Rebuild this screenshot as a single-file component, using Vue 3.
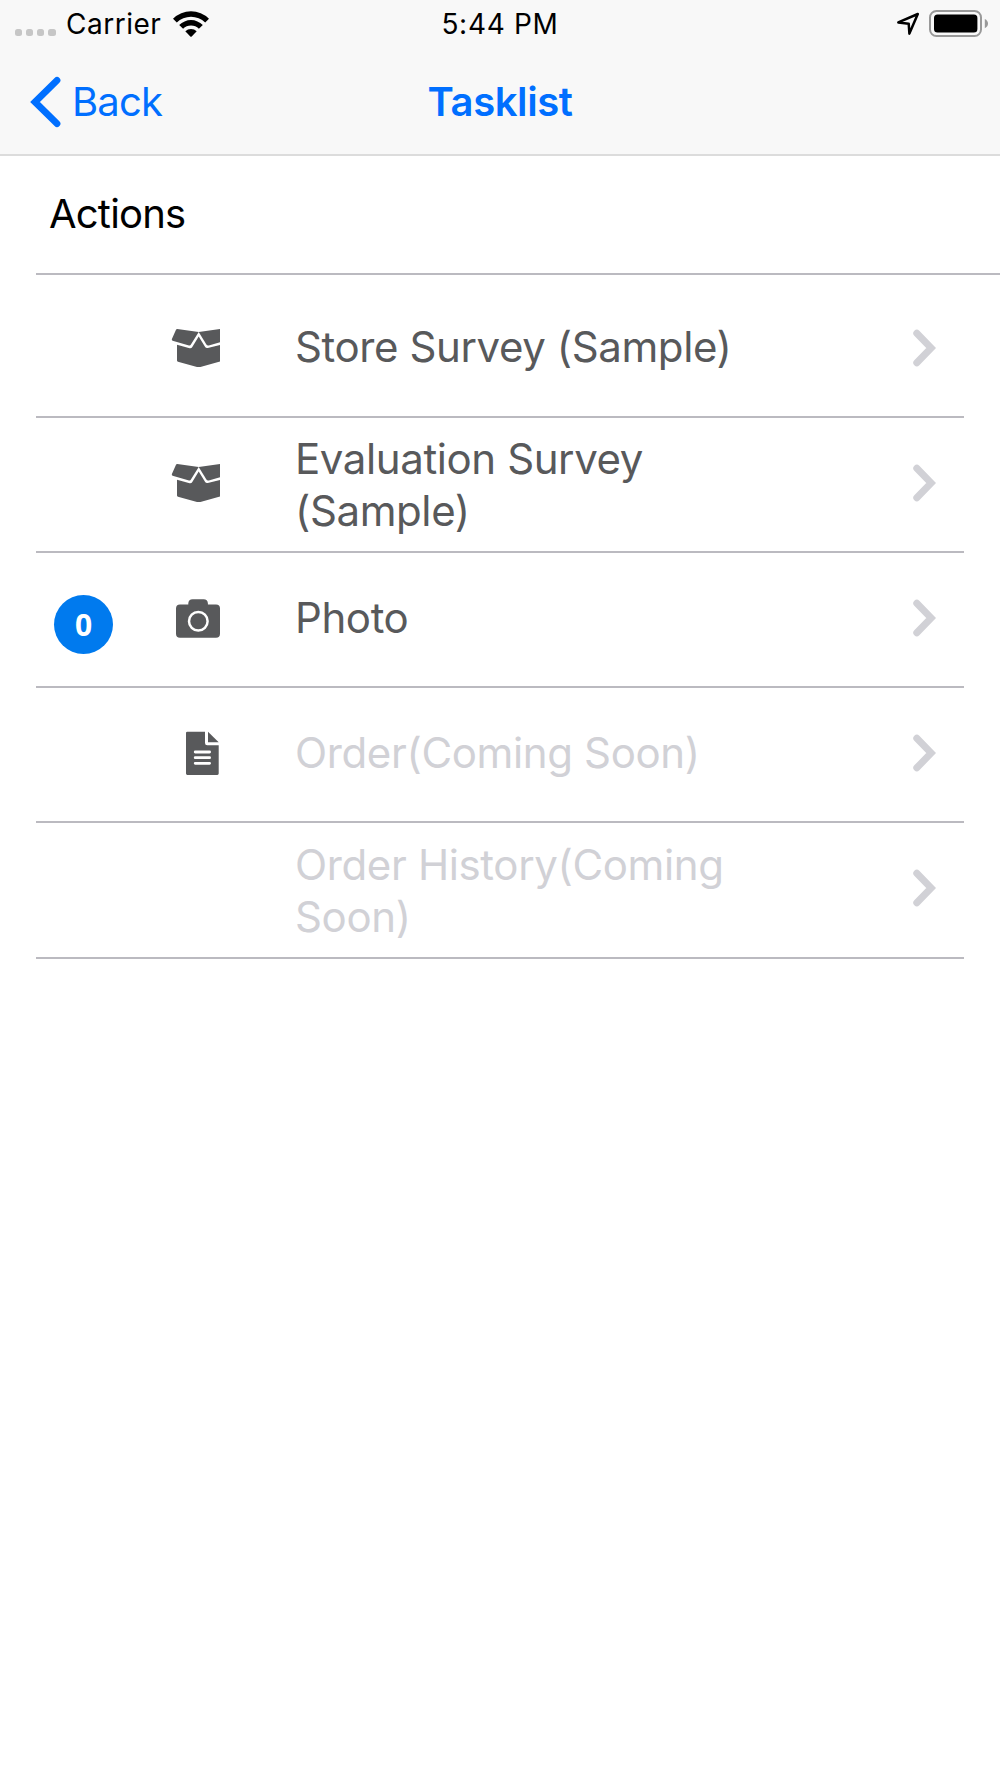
<template>
  <div class="screen">
    <header class="top-bar">
      <div class="status-bar">
        <div class="status-left">
          <div class="signal-dots">
            <i v-for="n in 4" :key="n"></i>
          </div>
          <span class="carrier">Carrier</span>
          <svg class="wifi" width="38" height="28" viewBox="0 0 38 28">
            <path d="M1 8.8 A25.5 25.5 0 0 1 37 8.8 L33.2 12.6 A20.1 20.1 0 0 0 4.8 12.6 Z" />
            <path d="M7.2 15 A16.7 16.7 0 0 1 30.8 15 L26.9 18.8 A11.2 11.2 0 0 0 11.1 18.8 Z" />
            <path d="M13.3 21.2 A8.2 8.2 0 0 1 24.7 21.2 L19.7 26.5 Q19 27.2 18.3 26.5 Z" />
          </svg>
        </div>
        <span class="time">5:44 PM</span>
        <div class="status-right">
          <svg width="24" height="26" viewBox="0 0 24 26">
            <path
              d="M2.3 12.4 L21.8 4 L13.4 23.6 L12.7 13.7 Z"
              fill="none" stroke="#000" stroke-width="2.5" stroke-linejoin="round"
            />
          </svg>
          <svg width="60" height="28" viewBox="0 0 60 28">
            <rect x="1" y="1" width="51" height="25" rx="6.5" fill="none" stroke="#999" stroke-width="2" />
            <rect x="5" y="4.6" width="43.4" height="18" rx="3.5" />
            <path d="M55.8 9 Q59 10.5 59 13.6 Q59 16.7 55.8 18.2 Z" fill="#999" />
          </svg>
        </div>
      </div>

      <nav class="nav-bar">
        <a class="back" role="button" tabindex="0">
          <svg width="34" height="54" viewBox="0 0 34 54">
            <path d="M28 5.3 L6 27 L28 48.7" />
          </svg>
          <span>Back</span>
        </a>
        <h1 class="title">Tasklist</h1>
      </nav>
    </header>

    <h2 class="section-title">Actions</h2>

    <ul class="task-list">
      <li
        v-for="task in tasks"
        :key="task.id"
        class="task"
        :class="{ disabled: task.disabled, tall: task.tall }"
      >
        <div class="badge-cell">
          <span v-if="task.count !== undefined" class="badge">{{ task.count }}</span>
        </div>
        <svg class="task-icon" width="50" height="48" viewBox="0 0 50 48">
          <g v-if="task.icon === 'box'">
            <path d="M6.3 5 L27.7 7.9 L19.9 20.6 Q19.3 21.8 18 21.5 L1.6 16.7 Q0.4 16.3 0.9 15 L5 5.8 Q5.4 4.9 6.3 5 Z" />
            <path d="M27.7 7.9 L49 5.1 V18.3 L37.8 21.4 Q36.2 21.8 35.4 20.5 Z" />
            <path d="M6 20.7 L18.6 24.2 Q20.4 24.6 21.3 23 L27.7 12.4 L34 22.8 Q35 24.5 36.8 24 L49 20.9 V37.6 L29.4 42.9 Q27.7 43.3 26 42.9 L7 37.8 Q6 37.4 6 36.4 Z" />
          </g>
          <g v-else-if="task.icon === 'camera'">
            <path d="M9 10.6 H17.3 V9.2 Q17.6 5.2 21.6 5.2 H32.6 Q36.6 5.2 36.9 9.2 V10.6 H45 Q49 10.6 49 14.6 V39.7 Q49 43.7 45 43.7 H9 Q5 43.7 5 39.7 V14.6 Q5 10.6 9 10.6 Z" />
            <circle cx="27.3" cy="27.2" r="9.3" fill="none" stroke="#fff" stroke-width="2.5" />
          </g>
          <g v-else-if="task.icon === 'document'">
            <path d="M16.4 2.7 H34 V14 Q34 16.3 36.3 16.3 H47.7 V44.6 Q47.7 46 46.3 46 H16.4 Q15 46 15 44.6 V4.1 Q15 2.7 16.4 2.7 Z" />
            <path d="M37 2.7 L47.7 13.3 H37 Z" />
            <path d="M24.2 23 H38.6 M24.2 28.7 H38.6 M24.2 34.3 H38.6" stroke="#fff" stroke-width="2.8" stroke-linecap="round" />
          </g>
        </svg>
        <span class="task-label">{{ task.label }}</span>
        <svg class="chevron" width="24" height="40" viewBox="0 0 24 40">
          <path d="M4.8 5.2 L19.2 20 L4.8 34.8" />
        </svg>
      </li>
    </ul>
  </div>
</template>

<script setup>
const tasks = [
  { id: 1, label: 'Store Survey (Sample)', icon: 'box' },
  { id: 2, label: 'Evaluation Survey (Sample)', icon: 'box', tall: true },
  { id: 3, label: 'Photo', icon: 'camera', count: 0 },
  { id: 4, label: 'Order(Coming Soon)', icon: 'document', disabled: true },
  { id: 5, label: 'Order History(Coming Soon)', disabled: true, tall: true }
];
</script>

<style>
body {
  background: #fff;
}
</style>

<style scoped>
.screen {
  min-height: 1778px;
  background: #fff;
  color: #000;
  font-family: Inter, "Liberation Sans", sans-serif;
}

.top-bar {
  box-sizing: border-box;
  height: 156px;
  background: #f8f8f8;
  border-bottom: 2px solid #dcdcdc;
}

/* Status bar */
.status-bar {
  display: grid;
  grid-template-columns: 1fr auto 1fr;
  height: 48px;
  font-size: 28px;
  line-height: 48px;
}

.status-left {
  display: flex;
  align-items: center;
  padding-left: 14.5px;
}

.signal-dots {
  display: flex;
  gap: 4px;
  width: 51.5px;
  padding-top: 17px;
}

.signal-dots i {
  width: 7.3px;
  height: 7.3px;
  border-radius: 2.5px;
  background: #c6c6c6;
}

.carrier {
  width: 106px;
  letter-spacing: 0.5px;
}

.status-left,
.time {
  white-space: nowrap;
}

.time {
  letter-spacing: 0.7px;
}

.status-right {
  display: flex;
  justify-content: flex-end;
  align-items: flex-start;
  gap: 9px;
  padding: 10px 11px 0 0;
}

/* Navigation */
.nav-bar {
  display: grid;
  grid-template-columns: 1fr auto 1fr;
  align-items: center;
  height: 107px;
  color: #006fff;
  font-size: 40px;
}

.back {
  display: flex;
  align-items: center;
  gap: 9px;
  padding-left: 29px;
  letter-spacing: -0.8px;
}

.back path {
  fill: none;
  stroke: currentColor;
  stroke-width: 6.8;
  stroke-linecap: round;
}

.title {
  margin: 0;
  font-size: 40px;
  font-weight: 600;
  letter-spacing: -0.4px;
}

/* Section header */
.section-title {
  box-sizing: border-box;
  height: 119px;
  margin: 0 0 0 36px;
  padding-left: 13px;
  border-bottom: 2px solid #bbbac0;
  font-size: 40px;
  font-weight: 400;
  line-height: 115px;
  letter-spacing: -0.8px;
}

/* Tasks */
.task-list {
  margin: 0 36px;
  padding: 7.6px 0 0;
  list-style: none;
}

.task {
  box-sizing: border-box;
  display: grid;
  grid-template-columns: 117px 50px 74px 460px 1fr;
  align-items: center;
  height: 135.2px;
  padding: 0 28px 3px 18px;
  border-bottom: 2px solid #bbbac0;
  color: #58595b;
}

.task-icon {
  fill: #58595b;
}

.badge {
  display: flex;
  justify-content: center;
  align-items: center;
  width: 59px;
  height: 59px;
  margin-top: 12px;
  border-radius: 50%;
  background: #007aee;
  color: #fff;
  font-family: "Open Sans", "Noto Sans", sans-serif;
  font-size: 30px;
  font-weight: 700;
}

.task-label {
  grid-column: 4;
  margin-top: -1px;
  font-size: 42px;
  line-height: 51.7px;
  letter-spacing: -0.4px;
}

.tall .task-label {
  margin-top: 4.6px;
}

.disabled {
  color: #d1d1d6;
}

.disabled .task-label {
  letter-spacing: -0.36px;
}

.chevron {
  justify-self: end;
}

.chevron path {
  fill: none;
  stroke: #d1d1d6;
  stroke-width: 7;
  stroke-linecap: round;
}
</style>
